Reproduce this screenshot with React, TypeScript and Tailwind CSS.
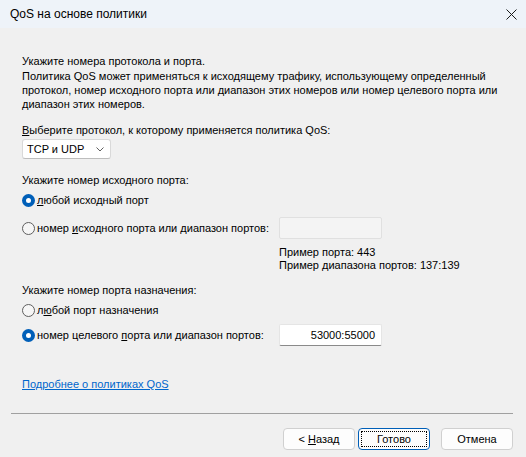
import React from "react";

const font = { fontFamily: '"Liberation Sans", Arial, sans-serif' };

function Radio({ checked }: { checked: boolean }) {
  return checked ? (
    <span className="flex h-[13px] w-[13px] shrink-0 items-center justify-center rounded-full bg-[#005fb8]">
      <span className="h-[5px] w-[5px] rounded-full bg-white" />
    </span>
  ) : (
    <span className="h-[13px] w-[13px] shrink-0 rounded-full border border-[#5f5f5f] bg-[#f6f6f6]" />
  );
}

export default function App() {
  return (
    <div
      className="flex h-[457px] w-[526px] flex-col overflow-hidden whitespace-nowrap bg-[#f0f0f0] text-[11px] leading-[14px] text-black"
      style={font}
    >
      {/* title bar */}
      <div className="flex h-[28px] shrink-0 items-center justify-between bg-[#eef3f9] pl-[10px] pr-[8px]">
        <span className="text-[12px]">QoS на основе политики</span>
        <svg width="11" height="11" viewBox="0 0 11 11" className="mr-[1px]">
          <path d="M0.5 0.5 L10.5 10.5 M10.5 0.5 L0.5 10.5" stroke="#1a1a1a" strokeWidth="1" />
        </svg>
      </div>

      <div className="flex flex-col pl-[22px] pt-[26px]">
        <div className="h-[14px]">Укажите номера протокола и порта.</div>
        <div className="mt-[1px] leading-[14px]">
          Политика QoS может применяться к исходящему трафику, использующему определенный
          <br />
          протокол, номер исходного порта или диапазон этих номеров или номер целевого порта или
          <br />
          диапазон этих номеров.
        </div>

        <div className="mt-[12px] h-[14px]">
          <span className="underline">В</span>ыберите протокол, к которому применяется политика QoS:
        </div>
        <div className="mt-[2px] flex h-[20px] w-[89px] items-center justify-between rounded-[3px] border border-[#d9d9d9] border-b-[#bdbdbd] bg-white pl-[4px] pr-[6px]">
          <span>TCP и UDP</span>
          <svg width="8" height="5" viewBox="0 0 8 5">
            <path d="M0.5 0.5 L4 4 L7.5 0.5" stroke="#606060" strokeWidth="1" fill="none" />
          </svg>
        </div>

        <div className="mt-[14px] h-[14px]">Укажите номер исходного порта:</div>
        <div className="mt-[3px] flex h-[20px] items-center">
          <Radio checked />
          <span className="ml-[2px]">
            <span className="underline">л</span>юбой исходный порт
          </span>
        </div>
        <div className="mt-[7px] flex h-[22px] items-center">
          <div className="flex w-[257px] items-center">
            <Radio checked={false} />
            <span className="ml-[2px]">
              номер <span className="underline">и</span>сходного порта или диапазон портов:
            </span>
          </div>
          <div className="h-[22px] w-[103px] rounded-[2px] border border-[#e0e0e0] bg-[#f4f4f4]" />
        </div>
        <div className="mt-[7px] pl-[257px] leading-[13px]">
          <div>Пример порта: 443</div>
          <div>Пример диапазона портов: 137:139</div>
        </div>

        <div className="mt-[11px] h-[14px]">Укажите номер порта назначения:</div>
        <div className="mt-[3px] flex h-[20px] items-center">
          <Radio checked={false} />
          <span className="ml-[2px]">
            л<span className="underline">ю</span>бой порт назначения
          </span>
        </div>
        <div className="mt-[4px] flex h-[22px] items-center">
          <div className="flex w-[257px] items-center">
            <Radio checked />
            <span className="ml-[2px]">
              номер целевого <span className="underline">п</span>орта или диапазон портов:
            </span>
          </div>
          <div className="flex h-[22px] w-[103px] items-center justify-end rounded-[2px] border border-[#e5e5e5] border-b-[#8a8a8a] bg-white pr-[6px]">
            53000:55000
          </div>
        </div>

        <div className="mt-[31px] h-[14px]">
          <span className="text-[#0066cc] underline">Подробнее о политиках QoS</span>
        </div>
      </div>

      <div className="ml-[11px] mr-[13px] mt-[22px] h-[1px] shrink-0 bg-[#a0a0a0]" />

      <div className="mr-[13px] mt-[14px] flex justify-end">
        <div className="flex h-[22px] w-[72px] items-center justify-center rounded-[4px] border border-[#d0d0d0] bg-[#fdfdfd]">
          &lt; <span className="ml-[3px] underline">Н</span>азад
        </div>
        <div className="ml-[3px] flex h-[22px] w-[72px] items-center justify-center rounded-[4px] border border-[#005fb8] bg-[#fdfdfd] p-[2px]">
          <div className="flex h-full w-full items-center justify-center border border-dotted border-black">
            Готово
          </div>
        </div>
        <div className="ml-[11px] flex h-[22px] w-[72px] items-center justify-center rounded-[4px] border border-[#d0d0d0] bg-[#fdfdfd]">
          Отмена
        </div>
      </div>
    </div>
  );
}
